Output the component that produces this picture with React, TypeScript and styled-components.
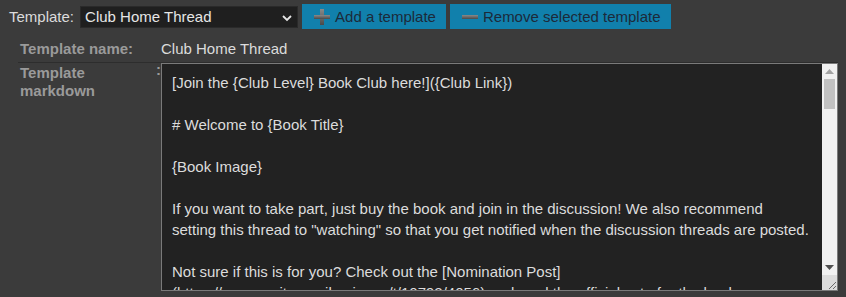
import styled, { createGlobalStyle } from "styled-components";

const GlobalStyle = createGlobalStyle`
  html, body {
    margin: 0;
    padding: 0;
    background: #3b3b3b;
    font-family: "Liberation Sans", Arial, sans-serif;
  }
`;

const Page = styled.div`
  width: 846px;
  height: 297px;
  overflow: hidden;
  background: #3b3b3b;
  color: #dcdcdc;
  font-size: 15px;
`;

const Toolbar = styled.div`
  display: flex;
  align-items: center;
  height: 33px;
  padding: 0 0 0 9px;
`;

const ToolbarLabel = styled.label`
  color: #dcdcdc;
  margin-right: 6px;
`;

const SelectBox = styled.div`
  position: relative;
  width: 218px;
  height: 22px;
  background: #1f1f1f;
  border: 1px solid #2a2a2a;
  box-sizing: border-box;
  display: flex;
  align-items: center;
  padding-left: 4px;
  color: #e6e6e6;
  margin-right: 4px;
`;

const Chevron = styled.svg`
  position: absolute;
  right: 5px;
  top: 7px;
`;

const Button = styled.button`
  display: flex;
  align-items: center;
  gap: 4px;
  height: 25px;
  padding: 0 10px 0 11px;
  margin-right: 4px;
  border: none;
  background: #1180ac;
  color: #1c2a3a;
  font-family: "Liberation Sans", Arial, sans-serif;
  font-size: 15px;
`;

const Form = styled.div`
  margin: 5px 8px 0 18px;
`;

const Row = styled.div<{ $divider?: boolean }>`
  display: flex;
  align-items: flex-start;
  border-top: ${(p) => (p.$divider ? "1px solid #2d2d2d" : "none")};
`;

const Label = styled.div<{ $top?: number }>`
  width: 136px;
  font-weight: bold;
  color: #9a9a9a;
  line-height: 18px;
  padding: ${(p) => p.$top ?? 2}px 0 0 2px;
`;

const Colon = styled.div`
  width: 5px;
  font-weight: bold;
  color: #9a9a9a;
  line-height: 14px;
`;

const Value = styled.div`
  padding: 2px 0 4px 0;
  line-height: 18px;
  color: #dcdcdc;
`;

const Editor = styled.div`
  position: relative;
  width: 677px;
  height: 228px;
`;

const Markdown = styled.textarea`
  box-sizing: border-box;
  display: block;
  width: 100%;
  height: 100%;
  margin: 0;
  padding: 8px 26px 8px 10px;
  background: #222222;
  color: #dcdcdc;
  border: 1px solid #7a7a7a;
  font-family: "Liberation Sans", Arial, sans-serif;
  font-size: 15px;
  line-height: 21px;
  outline: none;
  resize: none;
  overflow: hidden;
  scrollbar-width: none;
`;

const ScrollBar = styled.div`
  position: absolute;
  top: 1px;
  right: 1px;
  bottom: 1px;
  width: 15px;
  background: #f1f1f1;
  display: flex;
  flex-direction: column;
`;

const ArrowButton = styled.div`
  height: 15px;
  display: flex;
  align-items: center;
  justify-content: center;
`;

const Track = styled.div`
  flex: 1;
  padding: 0 2px;
`;

const Thumb = styled.div`
  height: 30px;
  background: #c1c1c1;
`;

const Corner = styled.div`
  height: 15px;
  background: #dcdcdc;
  display: flex;
  align-items: flex-end;
  justify-content: flex-end;
`;

const text = `[Join the {Club Level} Book Club here!]({Club Link})

# Welcome to {Book Title}

{Book Image}

If you want to take part, just buy the book and join in the discussion! We also recommend setting this thread to "watching" so that you get notified when the discussion threads are posted.

Not sure if this is for you? Check out the [Nomination Post](https://community.wanikani.com/t/10792/4056) and read the official vote for the book.`;

function PlusIcon() {
  return (
    <svg width="18" height="18" viewBox="0 0 18 18">
      <defs>
        <linearGradient id="pg" x1="0" y1="0" x2="0" y2="1">
          <stop offset="0" stopColor="#8a8a8a" />
          <stop offset="1" stopColor="#4a4a4a" />
        </linearGradient>
      </defs>
      <rect x="7" y="1" width="4" height="16" fill="url(#pg)" />
      <rect x="1" y="7" width="16" height="4" fill="url(#pg)" />
    </svg>
  );
}

function MinusIcon() {
  return (
    <svg width="18" height="18" viewBox="0 0 18 18">
      <defs>
        <linearGradient id="mg" x1="0" y1="0" x2="0" y2="1">
          <stop offset="0" stopColor="#8a8a8a" />
          <stop offset="1" stopColor="#4a4a4a" />
        </linearGradient>
      </defs>
      <rect x="1" y="7" width="16" height="4" fill="url(#mg)" />
    </svg>
  );
}

export default function App() {
  return (
    <Page>
      <GlobalStyle />
      <Toolbar>
        <ToolbarLabel>Template:</ToolbarLabel>
        <SelectBox>
          Club Home Thread
          <Chevron width="10" height="8" viewBox="0 0 10 8">
            <path d="M1 2 L5 6 L9 2" stroke="#e6e6e6" strokeWidth="1.8" fill="none" />
          </Chevron>
        </SelectBox>
        <Button>
          <PlusIcon />
          Add a template
        </Button>
        <Button>
          <MinusIcon />
          Remove selected template
        </Button>
      </Toolbar>
      <Form>
        <Row>
          <Label>Template name:</Label>
          <Colon />
          <Value>Club Home Thread</Value>
        </Row>
        <Row $divider>
          <Label $top={1}>
            Template
            <br />
            markdown
          </Label>
          <Colon>:</Colon>
          <Editor>
            <Markdown defaultValue={text} spellCheck={false} />
            <ScrollBar>
              <ArrowButton>
                <svg width="9" height="5" viewBox="0 0 9 5">
                  <path d="M0 5 L4.5 0 L9 5 Z" fill="#a3a3a3" />
                </svg>
              </ArrowButton>
              <Track>
                <Thumb />
              </Track>
              <ArrowButton>
                <svg width="9" height="5" viewBox="0 0 9 5">
                  <path d="M0 0 L4.5 5 L9 0 Z" fill="#505050" />
                </svg>
              </ArrowButton>
              <Corner>
                <svg width="10" height="10" viewBox="0 0 10 10">
                  <path d="M2 9 L9 2 M6 9 L9 6" stroke="#6a6a6a" strokeWidth="1" />
                </svg>
              </Corner>
            </ScrollBar>
          </Editor>
        </Row>
      </Form>
    </Page>
  );
}
